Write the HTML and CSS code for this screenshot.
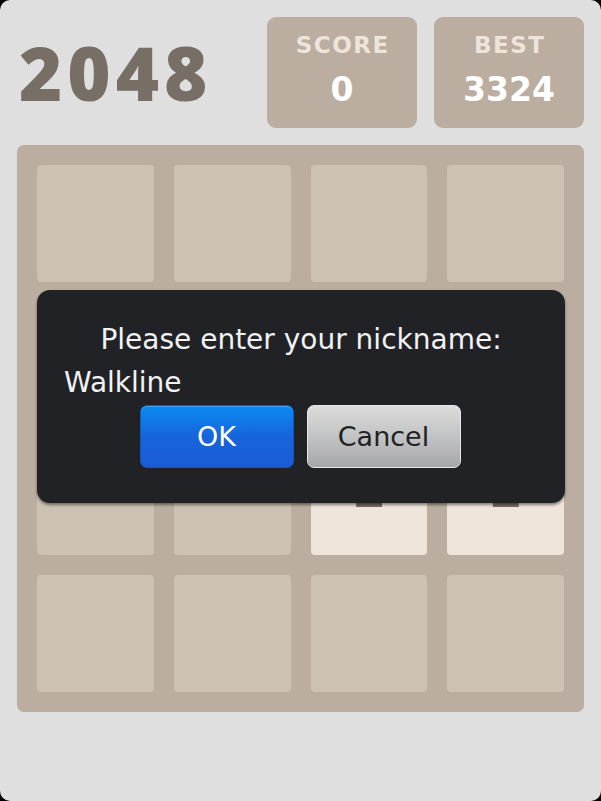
FILE: index.html
```html
<!DOCTYPE html>
<html>
<head>
<meta charset="utf-8">
<link rel="stylesheet" href="styles.css">
</head>
<body>
<div class="screen">
  <div class="header">
    <h1 class="title">2048</h1>
    <div class="scores">
      <div class="score-box"><div class="label">SCORE</div><div class="value">0</div></div>
      <div class="score-box"><div class="label">BEST</div><div class="value">3324</div></div>
    </div>
  </div>
  <div class="grid">
    <div class="cell"></div><div class="cell"></div><div class="cell"></div><div class="cell"></div>
    <div class="cell"></div><div class="cell"></div><div class="cell"></div><div class="cell"></div>
    <div class="cell"></div><div class="cell"></div><div class="cell tile-2">2</div><div class="cell tile-2">2</div>
    <div class="cell"></div><div class="cell"></div><div class="cell"></div><div class="cell"></div>
  </div>
  <div class="dialog">
    <div class="prompt">Please enter your nickname:</div>
    <div class="input">Walkline</div>
    <div class="buttons">
      <button class="btn btn-ok">OK</button>
      <button class="btn btn-cancel">Cancel</button>
    </div>
  </div>
</div>
</body>
</html>
```
FILE: styles.css
```css
html, body {
  margin: 0;
  padding: 0;
  background: #000;
}
.screen {
  position: relative;
  width: 601px;
  height: 801px;
  background: #dfdfdf;
  border-radius: 10px;
  box-sizing: border-box;
  padding: 17px 17px 0 17px;
  overflow: hidden;
}
.header {
  display: flex;
  align-items: center;
  justify-content: space-between;
  height: 111px;
}
.title {
  margin: 0 0 0 2px;
  font-family: "Open Sans", sans-serif;
  font-weight: 800;
  font-size: 74px;
  letter-spacing: 5px;
  color: #776e65;
  line-height: 1;
}
.scores {
  display: flex;
  gap: 17px;
}
.score-box {
  width: 150px;
  height: 111px;
  background: #bbada0;
  border-radius: 9px;
  display: flex;
  flex-direction: column;
  align-items: center;
  font-family: "DejaVu Sans", sans-serif;
  font-weight: 700;
}
.label {
  color: #eee4da;
  font-size: 23px;
  line-height: 23px;
  letter-spacing: 1.5px;
  margin-top: 17px;
  margin-left: 1.5px;
}
.value {
  color: #fff;
  font-size: 33px;
  line-height: 33px;
  margin-top: 16px;
}
.grid {
  margin-top: 17px;
  width: 567px;
  height: 567px;
  box-sizing: border-box;
  padding: 20px;
  background: #bbada0;
  border-radius: 7px;
  display: grid;
  grid-template-columns: repeat(4, 1fr);
  grid-template-rows: repeat(4, 1fr);
  gap: 20px;
}
.cell {
  background: #cdc1b4;
  border-radius: 4px;
}
.tile-2 {
  background: #eee4da;
  color: #776e65;
  font-family: "Open Sans", sans-serif;
  font-weight: 700;
  font-size: 52px;
  display: flex;
  align-items: center;
  justify-content: center;
  line-height: 1;
  padding-bottom: 19px;
  box-sizing: border-box;
}
.dialog {
  position: absolute;
  left: 37px;
  top: 290px;
  width: 528px;
  height: 213px;
  box-sizing: border-box;
  background: #202226;
  border-radius: 13px;
  box-shadow: 0 2px 3px rgba(0,0,0,0.45);
  padding: 33px 27px 0 27px;
  font-family: "DejaVu Sans", sans-serif;
  color: #f2f2f2;
  display: flex;
  flex-direction: column;
}
.prompt {
  font-size: 28px;
  line-height: 34px;
  text-align: center;
}
.input {
  font-size: 28px;
  line-height: 34px;
  margin-top: 9px;
}
.buttons {
  display: flex;
  justify-content: center;
  gap: 13px;
  margin-top: 5px;
  margin-left: -2px;
}
.btn {
  width: 154px;
  height: 63px;
  border-radius: 7px;
  font-family: "DejaVu Sans", sans-serif;
  font-size: 27px;
  padding: 0;
  box-sizing: border-box;
}
.btn-ok {
  color: #fff;
  background: linear-gradient(#0a8cf2, #1764dc 50%, #1a5cd6);
  border: 1px solid #1256c2;
  box-shadow: inset 0 1px 0 rgba(120,190,255,0.5);
}
.btn-cancel {
  color: #222;
  background: linear-gradient(#dddcdd, #c2c3c4 50%, #a5a8a9);
  border: 1px solid #e6e6e6;
}
```
